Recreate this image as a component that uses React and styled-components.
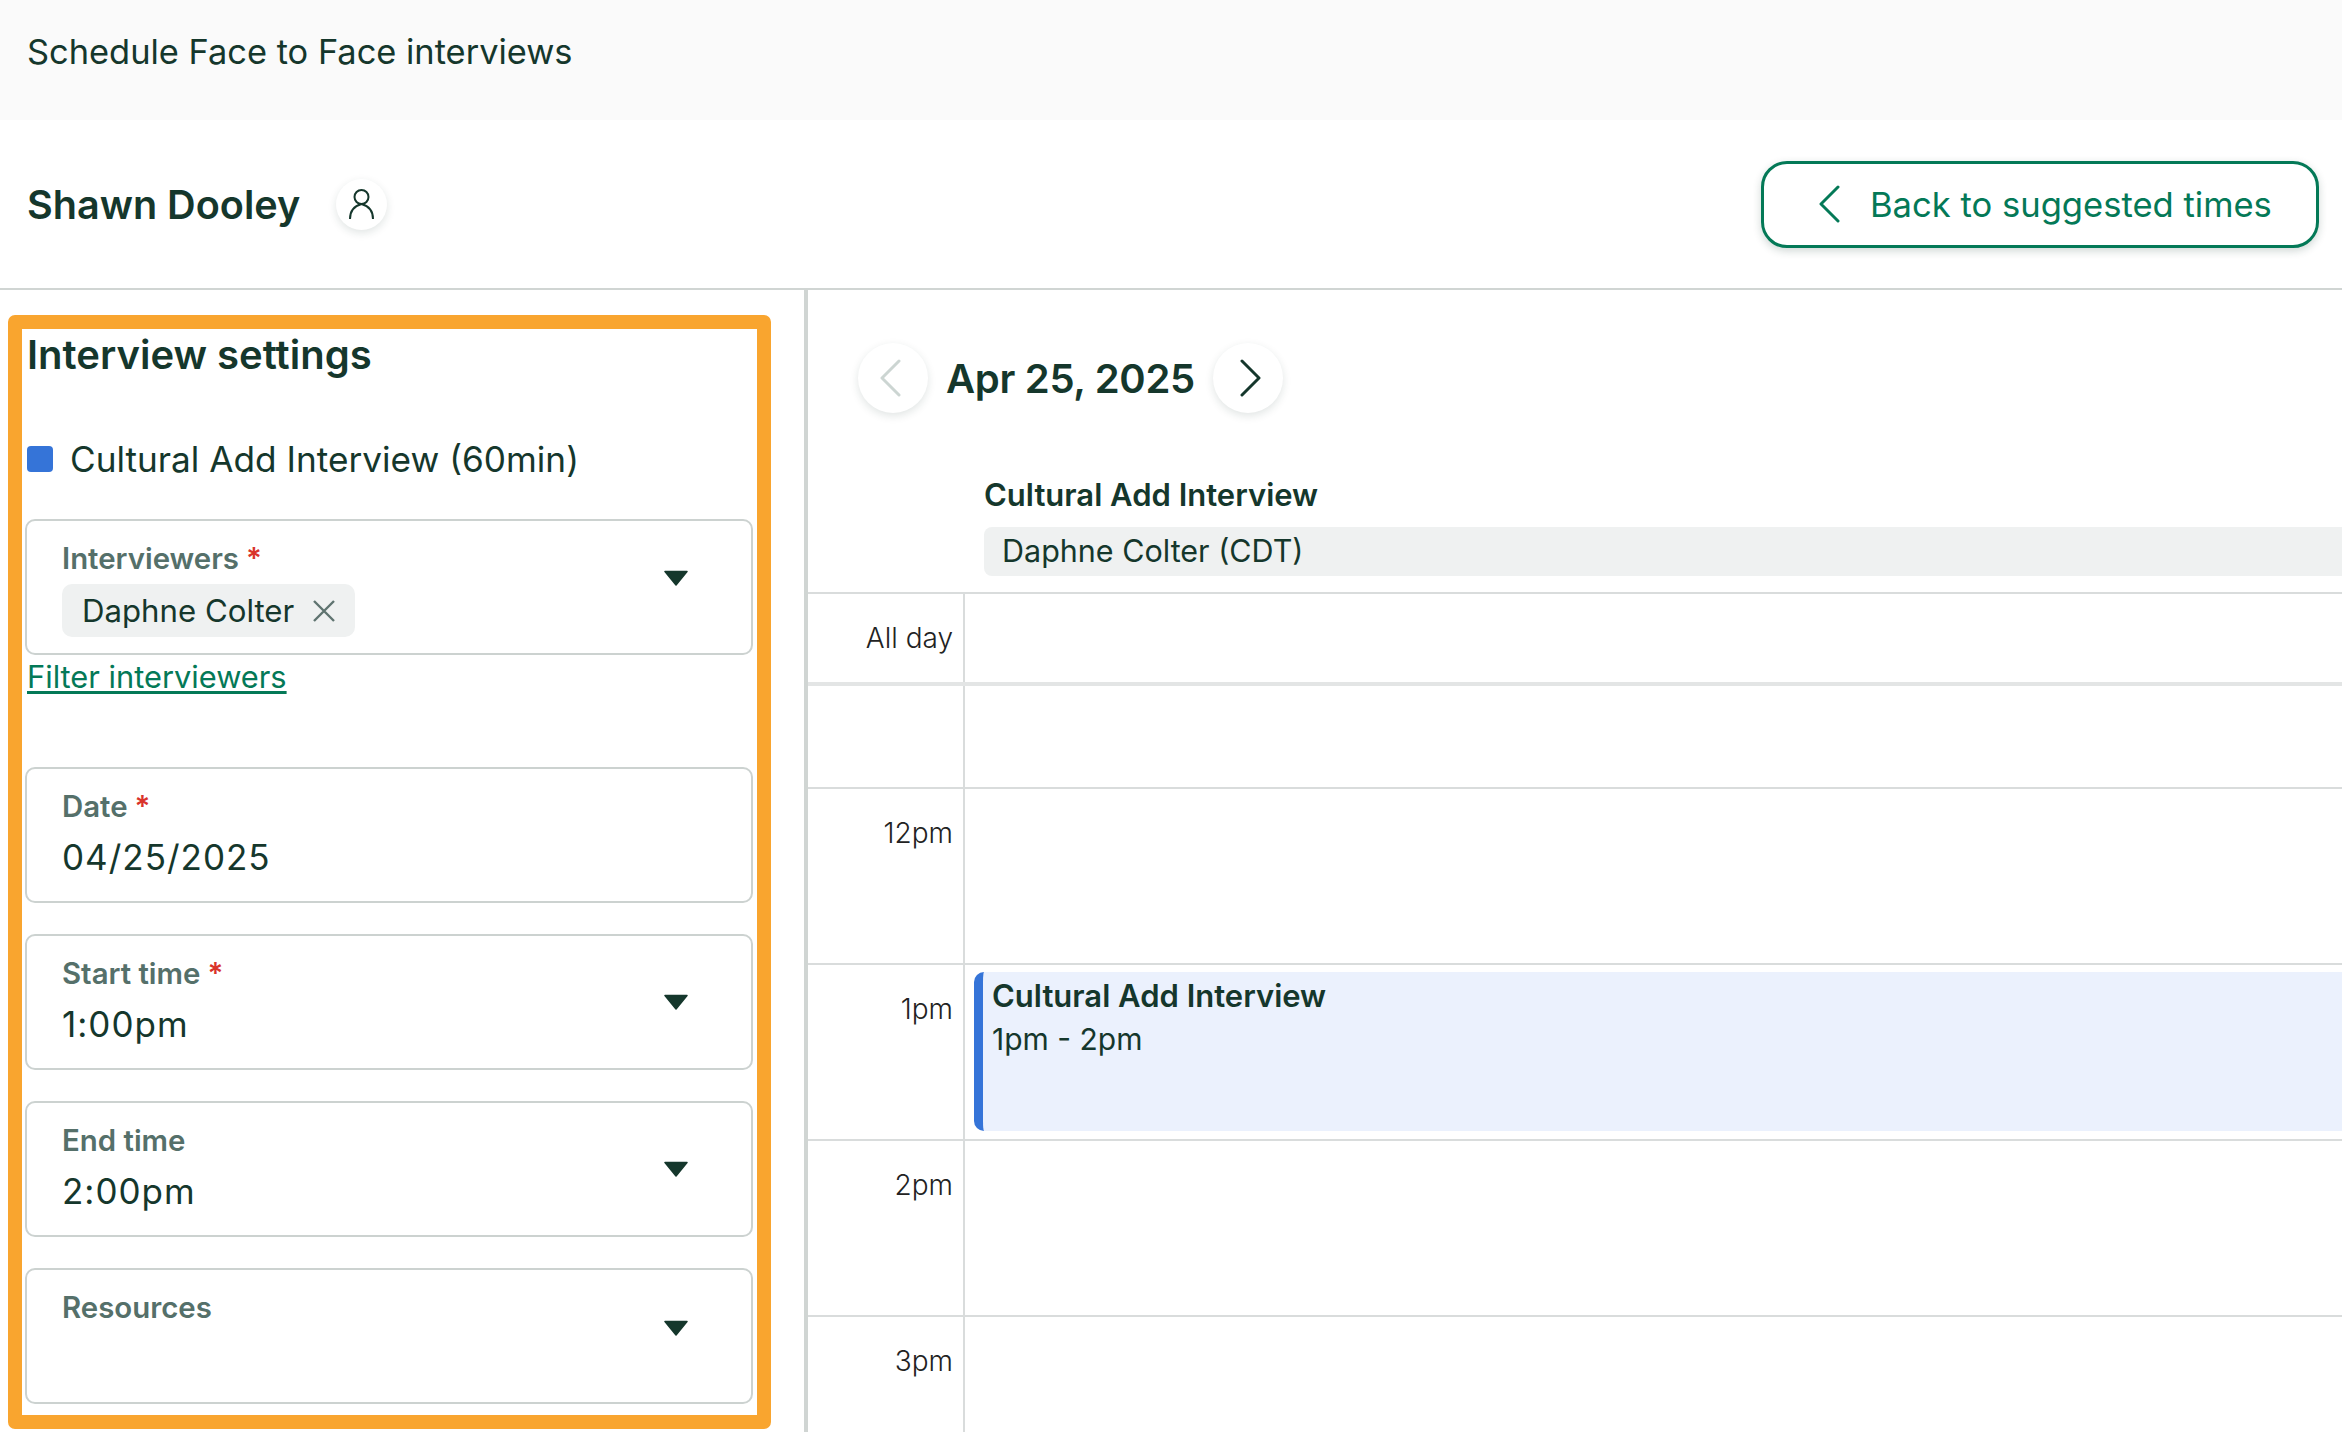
import React from "react";
import styled, { createGlobalStyle } from "styled-components";

const GlobalStyle = createGlobalStyle`
  html, body {
    margin: 0;
    padding: 0;
    background: #fff;
  }
  body {
    font-family: "Inter", "Liberation Sans", sans-serif;
    color: #15372c;
  }
  * {
    box-sizing: border-box;
  }
`;

const Page = styled.div`
  width: 2342px;
  height: 1432px;
  overflow: hidden;
  display: flex;
  flex-direction: column;
`;

const TopBar = styled.header`
  height: 120px;
  flex: none;
  background: #fafafa;
  display: flex;
  align-items: center;
  padding: 0 27px 16px;
  font-size: 34.4px;
  line-height: 44px;
`;

const NameRow = styled.div`
  height: 170px;
  flex: none;
  border-bottom: 2px solid #d0d5d3;
  display: flex;
  align-items: center;
  padding: 0 23px 0 27px;
`;

const CandidateName = styled.h1`
  margin: 0;
  padding-top: 2px;
  font-size: 39.6px;
  line-height: 48px;
  font-weight: 600;
`;

const Round = styled.span`
  display: flex;
  align-items: center;
  justify-content: center;
  flex: none;
  width: ${(p) => p.$size}px;
  height: ${(p) => p.$size}px;
  padding: ${(p) => p.$inset || "0"};
  border-radius: 50%;
  background: #fff;
  box-shadow: 0 3px 8px rgba(21, 55, 44, 0.13);
`;

const AvatarBadge = styled(Round)`
  margin-left: 36px;
`;

const BackButton = styled.button`
  margin-left: auto;
  width: 558px;
  height: 87px;
  display: flex;
  align-items: center;
  padding: 0 0 0 55px;
  gap: 30px;
  background: #fff;
  border: 3px solid #047957;
  border-radius: 26px;
  box-shadow: 0 3px 8px rgba(21, 55, 44, 0.2);
  color: #047957;
  font: inherit;
  font-size: 34.6px;
`;

const Body = styled.div`
  flex: 1;
  display: flex;
  min-height: 0;
`;

const Sidebar = styled.aside`
  width: 808px;
  flex: none;
  border-right: 4px solid #d0d5d3;
  padding: 25px 0 0 8px;
`;

const HighlightBox = styled.section`
  width: 763px;
  height: 1114px;
  border: 14px solid #f9a52f;
  border-radius: 7px;
  padding: 6px 4px 0 3px;
`;

const SettingsTitle = styled.h2`
  margin: 0 0 0 2px;
  font-size: 40px;
  line-height: 40px;
  font-weight: 600;
`;

const InterviewName = styled.div`
  display: flex;
  align-items: center;
  gap: 17px;
  margin: 64px 0 40px 2px;
  height: 40px;
  font-size: 35.2px;
`;

const ColorSquare = styled.span`
  width: 26px;
  height: 26px;
  border-radius: 4px;
  background: #3574d8;
`;

const FieldList = styled.div`
  display: flex;
  flex-direction: column;
  gap: 31px;
`;

const Field = styled.div`
  height: 136px;
  border: 2px solid #ccd2d0;
  border-radius: 10px;
  display: flex;
  justify-content: space-between;
  align-items: center;
  padding: 0 63px 0 35px;
`;

const FieldContent = styled.div`
  align-self: flex-start;
  padding-top: 21px;
`;

const FieldLabel = styled.div`
  display: flex;
  font-size: 29.4px;
  line-height: 34px;
  font-weight: 600;
  color: #55706a;
`;

const Required = styled.span`
  margin-left: 7px;
  color: #d9342b;
`;

const FieldValue = styled.div`
  margin-top: 13px;
  font-size: 35px;
  line-height: 40px;
  letter-spacing: 1px;
`;

const Chip = styled.div`
  display: inline-flex;
  align-items: center;
  height: 53px;
  margin-top: 8px;
  padding: 0 20px 0 20px;
  gap: 19px;
  border-radius: 10px;
  background: #eff1f1;
  font-size: 31.2px;
`;

const Caret = styled.svg`
  flex: none;
  margin-bottom: ${(p) => p.$raise || 0}px;
`;

const FilterLink = styled.a`
  display: block;
  width: fit-content;
  margin: 5px 0 73px 2px;
  font-size: 30.8px;
  line-height: 34px;
  color: #047957;
  text-decoration: underline;
  text-underline-offset: 3px;
`;

const Calendar = styled.main`
  flex: 1;
  min-width: 0;
`;

const DateNav = styled.div`
  display: flex;
  align-items: center;
  gap: 18px;
  padding: 53px 0 0 50px;
`;

const DateTitle = styled.h2`
  margin: 0;
  padding-top: 2px;
  font-size: 40px;
  line-height: 50px;
  font-weight: 600;
  letter-spacing: -0.3px;
`;

const ColumnHead = styled.div`
  padding: 64px 0 16px 176px;
`;

const ColumnTitle = styled.div`
  font-size: 31px;
  line-height: 36px;
  font-weight: 600;
`;

const PersonBar = styled.div`
  height: 49px;
  margin-top: 14px;
  padding: 0 0 2px 18px;
  display: flex;
  align-items: center;
  background: #eff1f1;
  border-radius: 8px 0 0 8px;
  font-size: 30.5px;
`;

const Row = styled.div`
  display: flex;
  height: ${(p) => p.$height}px;
  flex: none;
  border-top: ${(p) => (p.$thick ? "4px solid #e3e5e5" : "2px solid #d9dcdc")};
`;

const TimeLabel = styled.div`
  width: 155px;
  flex: none;
  padding: 27px 10px 0 0;
  text-align: right;
  font-size: 28px;
  line-height: 34px;
  font-weight: 300;
  color: #222;
`;

const Slot = styled.div`
  flex: 1;
  min-width: 0;
  border-left: 2px solid #d9dcdc;
`;

const EventCard = styled.div`
  height: 159px;
  margin: 7px 0 0 9px;
  padding: 7px 0 0 9px;
  background: #ebf1fd;
  border-left: 9px solid #3574d8;
  border-radius: 10px 0 0 10px;
`;

const EventTitle = styled.div`
  font-size: 31px;
  line-height: 34px;
  font-weight: 600;
`;

const EventTime = styled.div`
  margin-top: 9px;
  font-size: 30px;
  line-height: 34px;
`;

function Chevron({ left, color, width = 21, height = 38 }) {
  const d = left ? "M19 2 2 19l17 17" : "M2 2l17 17L2 36";
  return (
    <svg width={width} height={height} viewBox="0 0 21 38" fill="none">
      <path d={d} stroke={color} strokeWidth="3" strokeLinecap="round" strokeLinejoin="round" />
    </svg>
  );
}

function DownCaret({ raise }) {
  return (
    <Caret $raise={raise} width="24" height="16" viewBox="0 0 24 16">
      <path d="M1 1.5h22L12 15z" fill="#15372c" stroke="#15372c" strokeWidth="1.5" strokeLinejoin="round" />
    </Caret>
  );
}

function PersonIcon() {
  return (
    <svg width="25" height="30" viewBox="0 0 25 30" fill="none" stroke="#15372c" strokeWidth="2">
      <ellipse cx="12.5" cy="8" rx="7" ry="7" />
      <path d="M1 30c0-8 4-13 11.5-15C20 17 24 22 24 30" strokeLinecap="round" />
    </svg>
  );
}

function SelectField({ label, required, value, raise }) {
  return (
    <Field>
      <FieldContent>
        <FieldLabel>
          {label}
          {required && <Required>*</Required>}
        </FieldLabel>
        {value && <FieldValue>{value}</FieldValue>}
      </FieldContent>
      {raise !== undefined && <DownCaret raise={raise} />}
    </Field>
  );
}

const hours = ["12pm", "1pm", "2pm", "3pm"];

export default function App() {
  return (
    <Page>
      <GlobalStyle />
      <TopBar>Schedule Face to Face interviews</TopBar>
      <NameRow>
        <CandidateName>Shawn Dooley</CandidateName>
        <AvatarBadge $size={51}>
          <PersonIcon />
        </AvatarBadge>
        <BackButton>
          <Chevron left color="#047957" />
          Back to suggested times
        </BackButton>
      </NameRow>
      <Body>
        <Sidebar>
          <HighlightBox>
            <SettingsTitle>Interview settings</SettingsTitle>
            <InterviewName>
              <ColorSquare />
              Cultural Add Interview (60min)
            </InterviewName>
            <Field>
              <FieldContent>
                <FieldLabel>
                  Interviewers<Required>*</Required>
                </FieldLabel>
                <Chip>
                  Daphne Colter
                  <svg width="22" height="22" viewBox="0 0 22 22" stroke="#5f7470" strokeWidth="2.4">
                    <path d="M1 1l20 20M21 1 1 21" />
                  </svg>
                </Chip>
              </FieldContent>
              <DownCaret raise={18} />
            </Field>
            <FilterLink href="#">Filter interviewers</FilterLink>
            <FieldList>
              <SelectField label="Date" required value="04/25/2025" />
              <SelectField label="Start time" required value="1:00pm" raise={0} />
              <SelectField label="End time" value="2:00pm" raise={0} />
              <SelectField label="Resources" raise={17} />
            </FieldList>
          </HighlightBox>
        </Sidebar>
        <Calendar>
          <DateNav>
            <Round $size={70} $inset="0 5px 0 0">
              <Chevron left color="#ccd5d2" />
            </Round>
            <DateTitle>Apr 25, 2025</DateTitle>
            <Round $size={70} $inset="0 0 0 5px">
              <Chevron color="#15372c" />
            </Round>
          </DateNav>
          <ColumnHead>
            <ColumnTitle>Cultural Add Interview</ColumnTitle>
            <PersonBar>Daphne Colter (CDT)</PersonBar>
          </ColumnHead>
          <Row $height={90}>
            <TimeLabel>All day</TimeLabel>
            <Slot />
          </Row>
          <Row $height={105} $thick>
            <TimeLabel />
            <Slot />
          </Row>
          {hours.map((hour) => (
            <Row key={hour} $height={176}>
              <TimeLabel>{hour}</TimeLabel>
              <Slot>
                {hour === "1pm" && (
                  <EventCard>
                    <EventTitle>Cultural Add Interview</EventTitle>
                    <EventTime>1pm - 2pm</EventTime>
                  </EventCard>
                )}
              </Slot>
            </Row>
          ))}
        </Calendar>
      </Body>
    </Page>
  );
}
